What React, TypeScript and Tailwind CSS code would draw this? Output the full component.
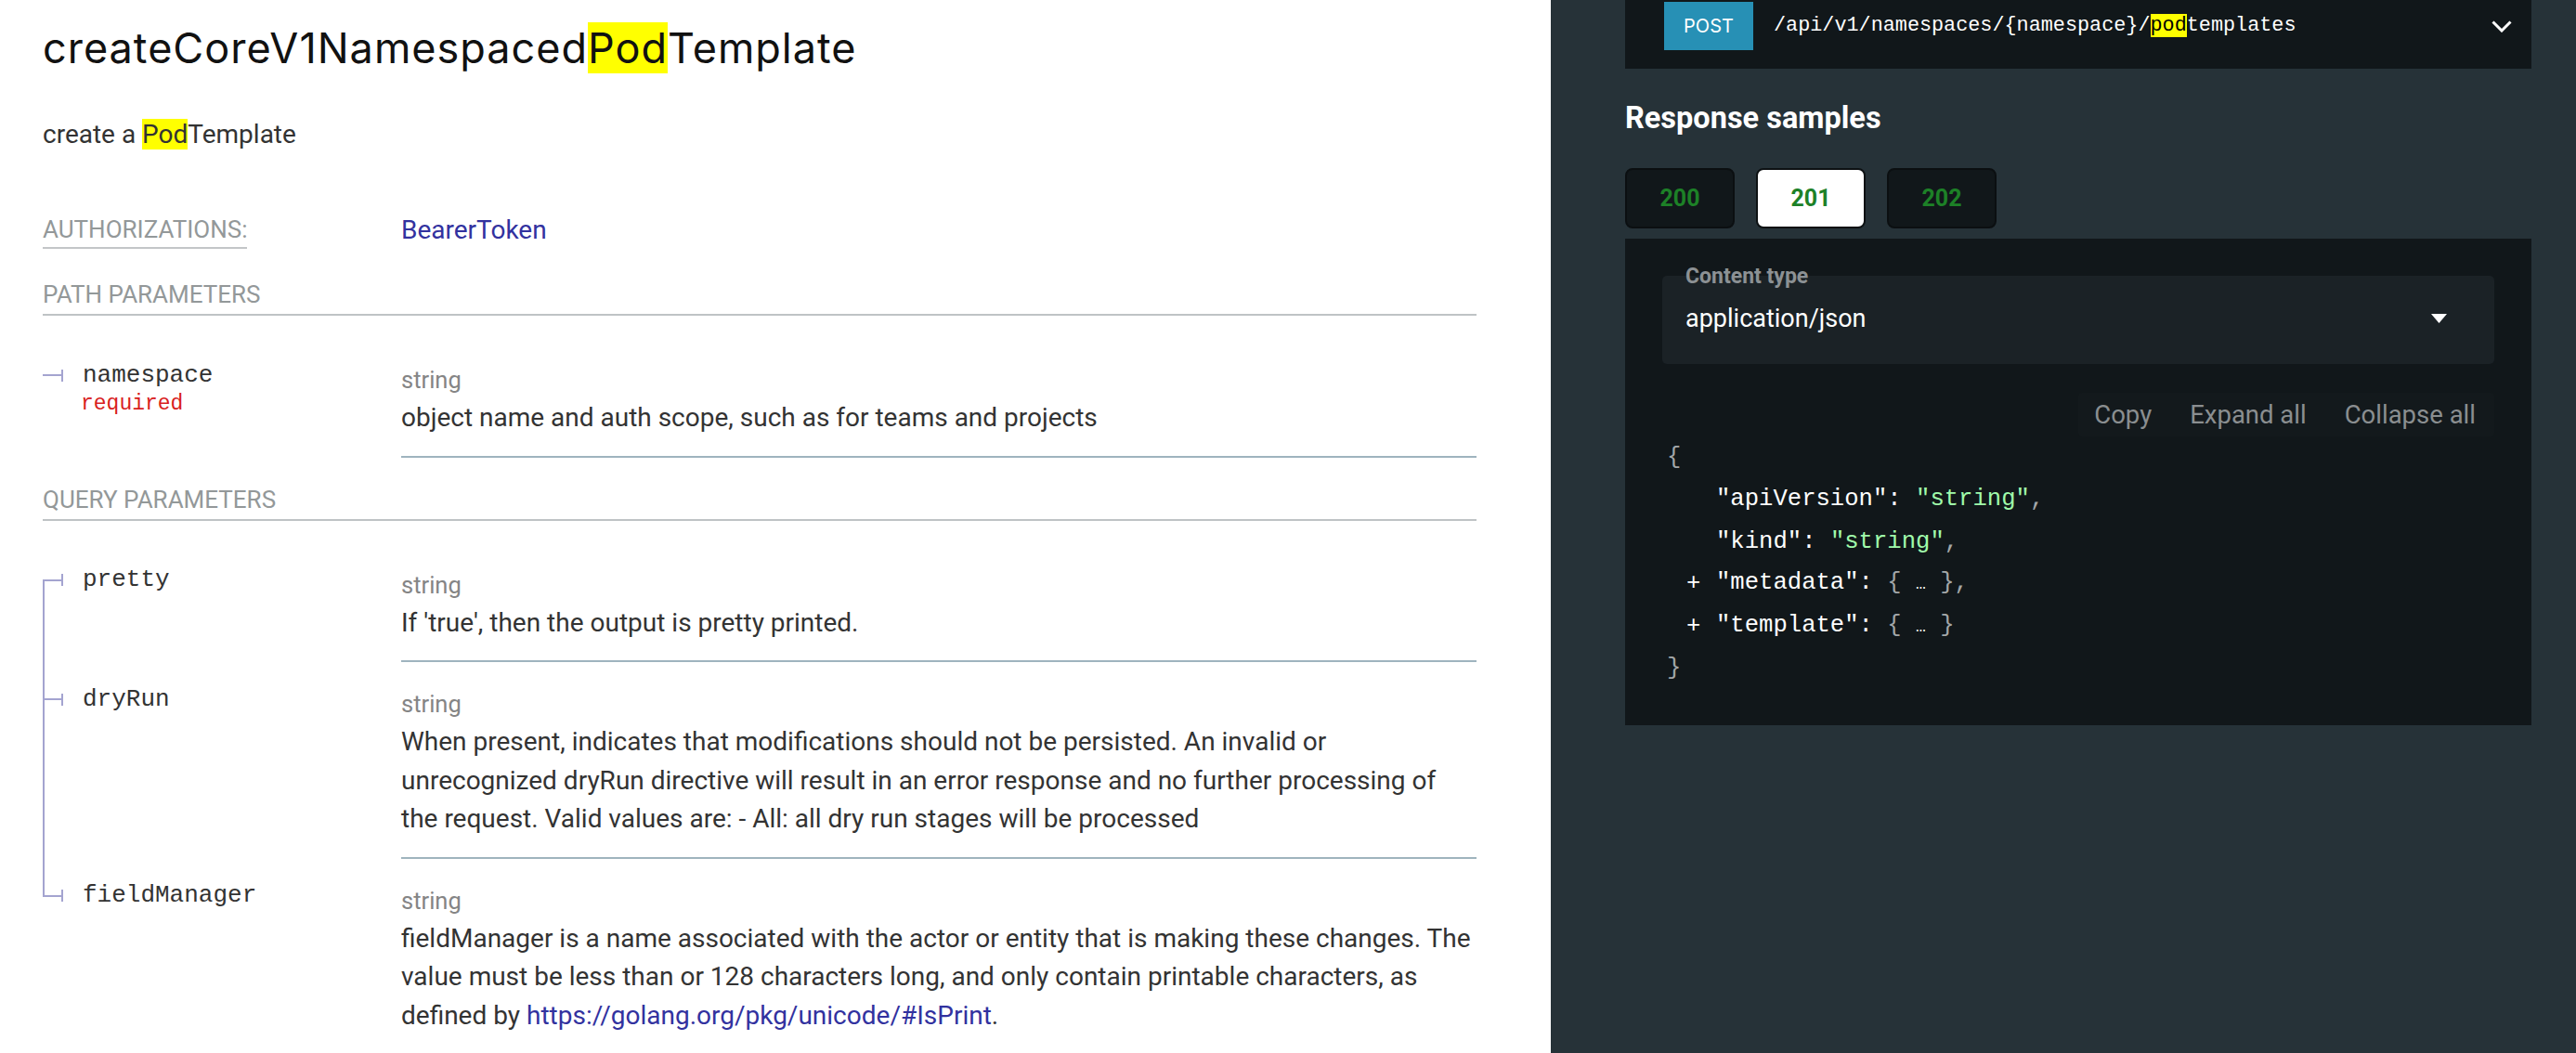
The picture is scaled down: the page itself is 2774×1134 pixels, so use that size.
import React from "react"

const line = "bg-[#a4a4d0]"

type Pos = "only" | "first" | "mid" | "last"

function ParamRow({
  name,
  required,
  desc,
  pos,
}: {
  name: string
  required?: boolean
  desc: React.ReactNode
  pos: Pos
}) {
  return (
    <div className="flex">
      <div className="relative w-[386px] shrink-0 pt-[24px]">
        {pos === "first" && <div className={`absolute bottom-0 left-0 top-[40px] w-[2px] ${line}`} />}
        {pos === "mid" && <div className={`absolute bottom-0 left-0 top-0 w-[2px] ${line}`} />}
        {pos === "last" && <div className={`absolute left-0 top-0 h-[41px] w-[2px] ${line}`} />}
        <div className="flex h-[32px] items-center">
          <span className={`h-[2px] w-[20px] ${line}`} />
          <span className={`h-[13px] w-[2px] ${line}`} />
          <span className="ml-[21px] font-['Liberation_Mono',monospace] text-[26px] text-[#333]">{name}</span>
        </div>
        {required && (
          <div className="pl-[41px] font-['Liberation_Mono',monospace] text-[23px] leading-[31px] text-[#d91e1e]">
            required
          </div>
        )}
      </div>
      <div className="flex-1 border-b-2 border-[#9fb4be] pb-[20px] pt-[25px]">
        <div className="text-[25.5px] leading-[40px] text-[#858585]">string</div>
        <div className="text-[28px] leading-[41.5px] text-[#333]">{desc}</div>
      </div>
    </div>
  )
}

function Header({ children, className = "" }: { children: React.ReactNode; className?: string }) {
  return (
    <h5
      className={`border-b-2 border-[#bfc3c5] pb-[3px] text-[26px] uppercase leading-[36px] text-[#939899] ${className}`}
    >
      {children}
    </h5>
  )
}

function Punct({ children }: { children: React.ReactNode }) {
  return <span className="text-[#a3a7a9]">{children}</span>
}

export default function App() {
  return (
    <div className="flex h-[1134px] w-[2774px] overflow-hidden bg-white font-['Roboto',sans-serif]">
      {/* left: operation docs */}
      <div className="w-[1670px] shrink-0 pl-[46px] pr-[80px]">
        <h1 className="mt-[24px] font-['Inter',sans-serif] text-[45px] font-normal leading-[55px] tracking-[1px] text-[#111]">
          createCoreV1Namespaced<mark className="bg-[#ffff00] text-[#111]">Pod</mark>Template
        </h1>
        <p className="mt-[45px] text-[28px] leading-[42px] text-[#333]">
          create a <mark className="bg-[#ffff00] text-[#333]">Pod</mark>Template
        </p>

        <div className="mt-[63px] flex items-start">
          <div className="w-[386px] shrink-0">
            <span className="inline-block border-b-2 border-[#c3c6c8] text-[26px] uppercase leading-[37px] text-[#939899]">
              Authorizations:
            </span>
          </div>
          <a className="text-[28px] leading-[37px] text-[#32329f]">BearerToken</a>
        </div>

        <Header className="mt-[31px]">Path Parameters</Header>
        <div className="mt-[24px]">
          <ParamRow
            name="namespace"
            required
            pos="only"
            desc="object name and auth scope, such as for teams and projects"
          />
        </div>

        <Header className="mt-[27px]">Query Parameters</Header>
        <div className="mt-[24px]">
          <ParamRow name="pretty" pos="first" desc="If 'true', then the output is pretty printed." />
          <ParamRow
            name="dryRun"
            pos="mid"
            desc="When present, indicates that modifications should not be persisted. An invalid or unrecognized dryRun directive will result in an error response and no further processing of the request. Valid values are: - All: all dry run stages will be processed"
          />
          <ParamRow
            name="fieldManager"
            pos="last"
            desc={
              <>
                fieldManager is a name associated with the actor or entity that is making these changes. The value
                must be less than or 128 characters long, and only contain printable characters, as defined by{" "}
                <a className="text-[#32329f]">https://golang.org/pkg/unicode/#IsPrint</a>.
              </>
            }
          />
        </div>
      </div>

      {/* right: samples panel */}
      <div className="flex-1 bg-[#263238] pl-[80px] pr-[48px]">
        <div className="bg-[#11171a] pb-[20px] pl-[42px] pr-[21px] pt-[2px]">
          <div className="flex h-[52px] items-center">
            <div className="flex h-[52px] w-[96px] items-center justify-center bg-[#2790b5] font-['Inter',sans-serif] text-[20px] text-white">
              POST
            </div>
            <div className="ml-[22px] flex-1 font-['Liberation_Mono',monospace] text-[21.8px] text-white">
              /api/v1/namespaces/{"{namespace}"}/<mark className="bg-[#ffff00] text-black">pod</mark>templates
            </div>
            <svg width="22" height="13" viewBox="0 0 22 13" fill="none">
              <path d="M1.5 1.5 L11 11 L20.5 1.5" stroke="white" strokeWidth="3" />
            </svg>
          </div>
        </div>

        <h3 className="mt-[33px] text-[32.5px] font-bold leading-[40px] text-white">Response samples</h3>

        <div className="mt-[34px] flex gap-[23px]">
          {["200", "201", "202"].map((c) => (
            <div
              key={c}
              className={`flex h-[65px] w-[118px] items-center justify-center rounded-[8px] border-2 text-[25px] font-bold text-[#1d8127] ${
                c === "201" ? "border-[#0d1113] bg-white" : "border-[#0b0f11] bg-[#11171a]"
              }`}
            >
              {c}
            </div>
          ))}
        </div>

        <div className="mt-[11px] bg-[#11171a] pb-[39px] pl-[40px] pr-[40px] pt-[40px]">
          <div className="relative flex h-[95px] items-start rounded-[5px] bg-[#1b2226] pl-[25px] pr-[51px] pt-[28px]">
            <span className="absolute left-[25px] top-[-14px] text-[23px] font-bold leading-[30px] text-[#8c9194]">
              Content type
            </span>
            <span className="flex-1 text-[27px] leading-[36px] text-white">application/json</span>
            <svg className="mt-[13px]" width="17" height="10" viewBox="0 0 17 10">
              <path d="M0 0 H17 L8.5 10 Z" fill="white" />
            </svg>
          </div>

          <div className="mt-[31px] flex justify-end">
            <div className="flex h-[47px] items-center gap-[41px] rounded-[4px] bg-[#13191c] pl-[17px] pr-[20px] text-[27.5px] text-[#8a8e90]">
              <span>Copy</span>
              <span>Expand all</span>
              <span>Collapse all</span>
            </div>
          </div>

          <div className="pl-[5px] font-['Liberation_Mono',monospace] text-[25.6px] leading-[45.4px] text-white">
            <div>
              <Punct>{"{"}</Punct>
            </div>
            <div className="pl-[53px]">
              "apiVersion": <span className="text-[#a0fbaa]">"string"</span>
              <Punct>,</Punct>
            </div>
            <div className="pl-[53px]">
              "kind": <span className="text-[#a0fbaa]">"string"</span>
              <Punct>,</Punct>
            </div>
            <div className="flex h-[45.4px] items-center pl-[21px]">
              <span className="w-[32px]">+</span>
              <span>
                "metadata": <Punct>{"{"}</Punct> <span className="text-[18px]">…</span> <Punct>{"},"}</Punct>
              </span>
            </div>
            <div className="flex h-[45.4px] items-center pl-[21px]">
              <span className="w-[32px]">+</span>
              <span>
                "template": <Punct>{"{"}</Punct> <span className="text-[18px]">…</span> <Punct>{"}"}</Punct>
              </span>
            </div>
            <div>
              <Punct>{"}"}</Punct>
            </div>
          </div>
        </div>
      </div>
    </div>
  )
}
